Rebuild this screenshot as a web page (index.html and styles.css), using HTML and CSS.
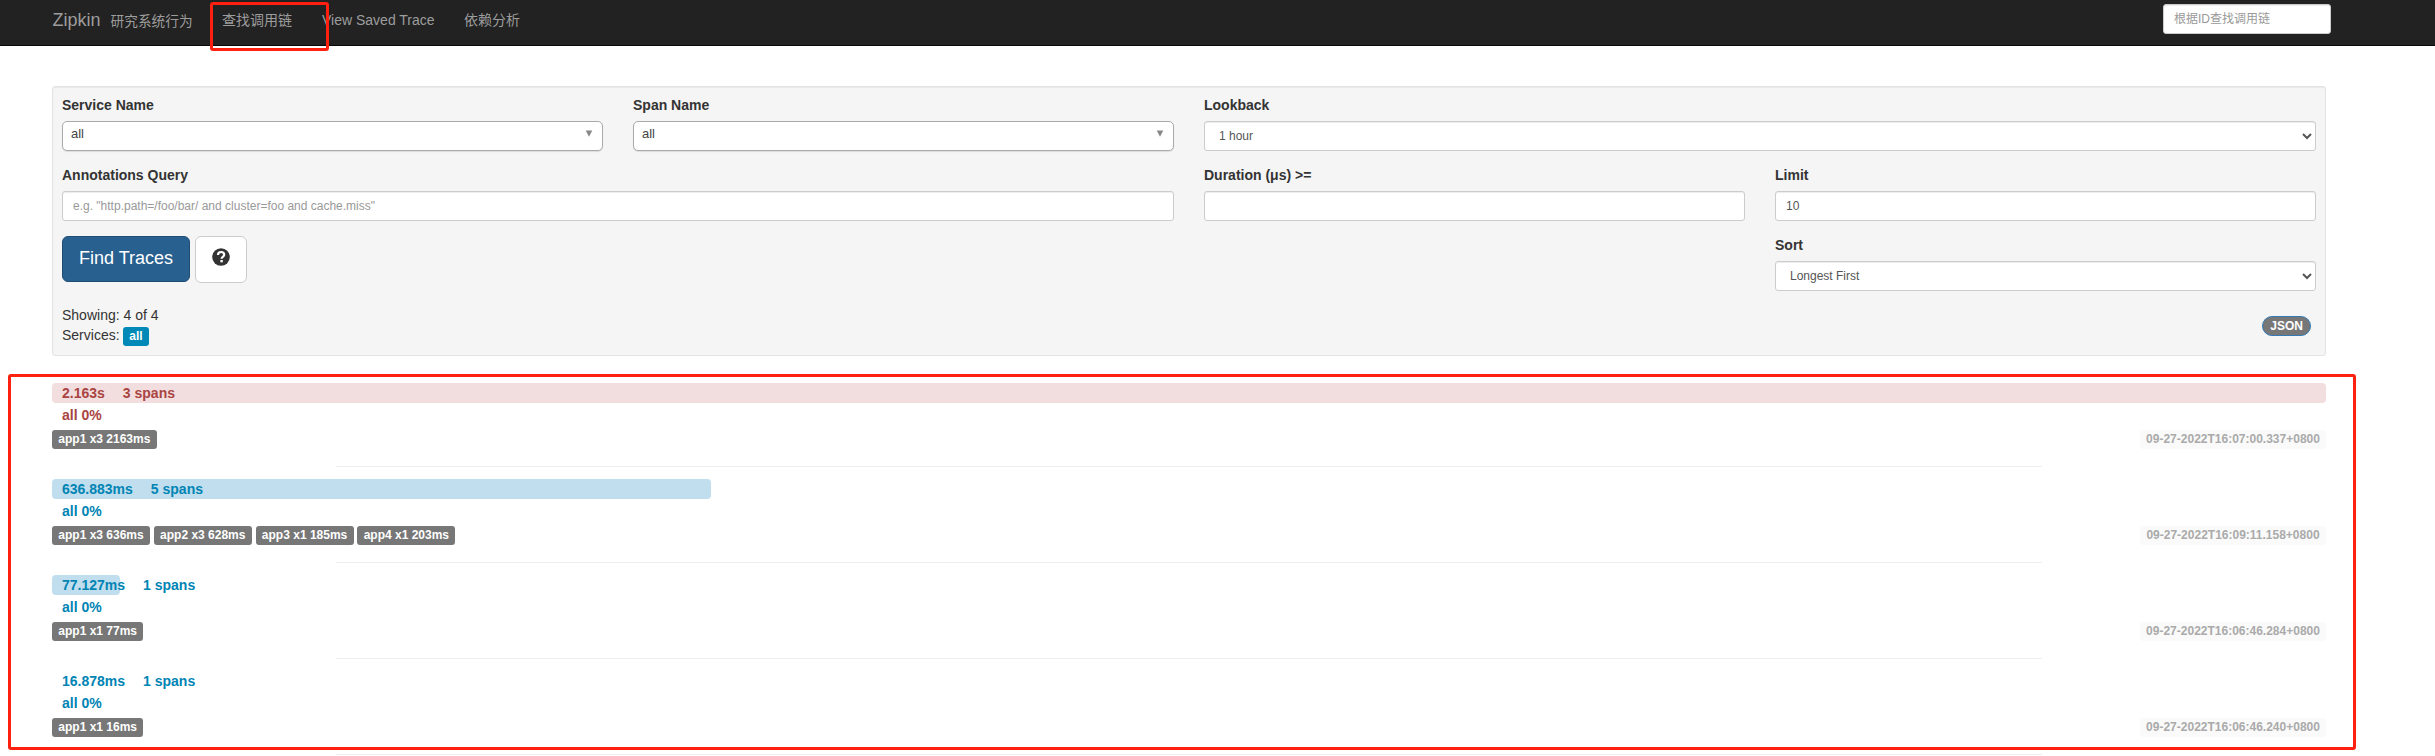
FILE: index.html
```
<!DOCTYPE html>
<html lang="zh">
<head>
<meta charset="utf-8">
<title>Zipkin</title>
<link rel="stylesheet" href="styles.css">
</head>
<body>
<nav class="navbar">
  <a class="brand">Zipkin <small>研究系统行为</small></a>
  <div class="nav-links"><a>查找调用链</a><a class="saved">View Saved Trace</a><a>依赖分析</a></div>
  <input class="control search" type="text" placeholder="根据ID查找调用链">
</nav>
<main class="page">
  <form class="well">
    <div class="grid">
      <div class="field"><label>Service Name</label><div class="chosen"><span>all</span><svg class="caret" viewBox="0 0 8 8"><path d="M0.2 0.5h7.600L4 7.800z"/></svg></div></div>
      <div class="field"><label>Span Name</label><div class="chosen"><span>all</span><svg class="caret" viewBox="0 0 8 8"><path d="M0.2 0.5h7.600L4 7.800z"/></svg></div></div>
      <div class="field wide"><label>Lookback</label><select class="control"><option>1 hour</option></select></div>
      <div class="field wide"><label>Annotations Query</label><input class="control" type="text" placeholder="e.g. &quot;http.path=/foo/bar/ and cluster=foo and cache.miss&quot;"></div>
      <div class="field"><label>Duration (μs) &gt;=</label><input class="control" type="text"></div>
      <div class="field"><label>Limit</label><input class="control" type="text" value="10"></div>
      <div class="buttons">
        <button class="btn primary" type="button">Find Traces</button>
        <button class="btn help" type="button"><svg viewBox="0 0 18 18"><circle cx="9" cy="9" r="8.8" fill="#333"/><path d="M6 6.9C6 4.9 7.200 4 9.100 4s3.100 1 3.100 2.700c0 2.100-2.600 2.100-2.600 4" fill="none" stroke="#fff" stroke-width="2.200"/><path d="M8.400 12h2.400v2.300H8.400z" fill="#fff"/></svg></button>
      </div>
      <div class="field sort"><label>Sort</label><select class="control"><option>Longest First</option></select></div>
    </div>
    <div class="summary">
      <div><div class="line">Showing: 4 of 4</div><div class="line">Services: <span class="label service">all</span></div></div>
      <a class="json">JSON</a>
    </div>
  </form>
  <ul class="traces">
    <li class="trace danger">
      <div class="duration"><div class="bar" style="width:100%"></div><span class="caption">2.163s</span><span>3 spans</span></div>
      <div class="percent">all 0%</div>
      <div class="meta"><span class="label">app1 x3 2163ms</span><time class="stamp">09-27-2022T16:07:00.337+0800</time></div>
      <hr>
    </li>
    <li class="trace">
      <div class="duration"><div class="bar" style="width:29%"></div><span class="caption">636.883ms</span><span>5 spans</span></div>
      <div class="percent">all 0%</div>
      <div class="meta"><span class="label">app1 x3 636ms</span><span class="label">app2 x3 628ms</span><span class="label">app3 x1 185ms</span><span class="label">app4 x1 203ms</span><time class="stamp">09-27-2022T16:09:11.158+0800</time></div>
      <hr>
    </li>
    <li class="trace">
      <div class="duration"><div class="bar" style="width:3%"></div><span class="caption">77.127ms</span><span>1 spans</span></div>
      <div class="percent">all 0%</div>
      <div class="meta"><span class="label">app1 x1 77ms</span><time class="stamp">09-27-2022T16:06:46.284+0800</time></div>
      <hr>
    </li>
    <li class="trace">
      <div class="duration"><div class="bar" style="width:0%"></div><span class="caption">16.878ms</span><span>1 spans</span></div>
      <div class="percent">all 0%</div>
      <div class="meta"><span class="label">app1 x1 16ms</span><time class="stamp">09-27-2022T16:06:46.240+0800</time></div>
      <hr>
    </li>
  </ul>
</main>
<div class="mark mark-nav"></div>
<div class="mark mark-list"></div>
</body>
</html>
```
FILE: styles.css
```
* { box-sizing: border-box; }
html, body { margin: 0; height: 756px; overflow: hidden; }
body {
  position: relative;
  background: #fff;
  color: #333;
  font: 14px/20px "Liberation Sans", Arial, "Noto Sans CJK SC", sans-serif;
}
.navbar {
  display: flex;
  align-items: flex-start;
  height: 46px;
  padding: 0 104px 0 52.5px;
  background: #222;
  border-bottom: 1px solid #080808;
  color: #9d9d9d;
}
.brand { width: 154.5px; padding-top: 10px; font-size: 18px; white-space: nowrap; }
.brand small { margin-left: 5px; font-size: 13.7px; }
.nav-links { display: flex; padding-top: 10px; }
.nav-links a { padding: 0 15px; white-space: nowrap; }
.nav-links .saved { width: 142px; }
.navbar .search { width: 168px; margin: 4px 0 0 auto; }
.control {
  display: block;
  width: 100%;
  height: 30px;
  padding: 5px 10px;
  border: 1px solid #ccc;
  border-radius: 3px;
  background: #fff;
  box-shadow: inset 0 1px 1px rgba(0,0,0,.075);
  color: #555;
  font: 12px/18px "Liberation Sans", Arial, "Noto Sans CJK SC", sans-serif;
}
.control::placeholder { color: #999; opacity: 1; }
.page { padding: 40px 109px 0 52px; }
.well {
  height: 270px;
  padding: 9px;
  border: 1px solid #e3e3e3;
  border-radius: 3px;
  background: #f5f5f5;
  box-shadow: inset 0 1px 1px rgba(0,0,0,.05);
}
.grid { display: grid; grid-template-columns: repeat(4, 1fr); gap: 15px 30px; }
.wide, .buttons { grid-column: span 2; }
.sort { grid-column: 4; }
.field label { display: block; height: 20px; margin-bottom: 5px; font-weight: bold; line-height: 18px; }
.chosen {
  display: flex;
  justify-content: space-between;
  height: 30px;
  padding: 2px 9px 0 8px;
  border: 1px solid #aaa;
  border-radius: 5px;
  background: #fff;
  box-shadow: 0 1px 1px rgba(0,0,0,.1);
  color: #444;
  font-size: 13px;
}
.caret { width: 8px; height: 7px; margin-top: 6px; fill: #888; }
.buttons { display: flex; align-items: flex-start; gap: 5px; }
.btn { height: 46px; padding: 0; border-radius: 6px; font: 18px/24px "Liberation Sans", Arial, sans-serif; }
.primary { width: 128px; padding-bottom: 2px; border: 1px solid #204d74; background: #286090; color: #fff; }
.help { display: flex; justify-content: center; width: 52px; height: 47px; padding-top: 11px; border: 1px solid #ccc; background: #fff; }
.help svg { width: 18px; height: 18px; }
.summary { display: flex; justify-content: space-between; margin-top: 14px; }
.line { display: flex; align-items: center; gap: 3px; height: 20px; }
.json {
  height: 20px;
  margin: 11px 5px 0 0;
  padding: 0 7px;
  border: 1px solid #337ab7;
  border-radius: 10px;
  background: #777;
  color: #fff;
  font-size: 12px;
  font-weight: bold;
  line-height: 18px;
}
.label {
  height: 19px;
  padding: 0 6.3px;
  border-radius: 3px;
  background: #777;
  color: #fff;
  font-size: 12px;
  font-weight: bold;
  line-height: 18px;
  white-space: nowrap;
}
.service { margin-top: 2px; padding: 0 6.700px; background: #0088b6; }
.traces { margin: 27px 0 0; padding: 0; list-style: none; }
.trace { height: 96px; color: #0084b4; font-weight: bold; }
.duration { display: flex; position: relative; height: 20px; padding-left: 10px; gap: 18px; }
.duration span { position: relative; }
.bar { position: absolute; left: 0; top: 0; height: 20px; border-radius: 4px; background: #c0deed; }
.percent { padding: 2px 0 0 10px; }
.meta { display: flex; gap: 3.8px; margin-top: 5px; }
.stamp { width: 186px; height: 19px; margin-left: auto; border-radius: 3px; background: #fafafa; color: #aaa; font-size: 12px; line-height: 18px; text-align: center; white-space: nowrap; }
.trace hr { width: 75%; height: 1px; margin: 17px auto 0; border: 0; background: #eee; }
.danger { color: #a94442; }
.danger .bar { background: #f2dede; }
.mark { position: absolute; border: 3px solid #ff2010; border-radius: 3px; pointer-events: none; }
.mark-nav { left: 210px; top: 2px; width: 119px; height: 49px; }
.mark-list { left: 8px; top: 374px; width: 2348px; height: 376px; }
```
